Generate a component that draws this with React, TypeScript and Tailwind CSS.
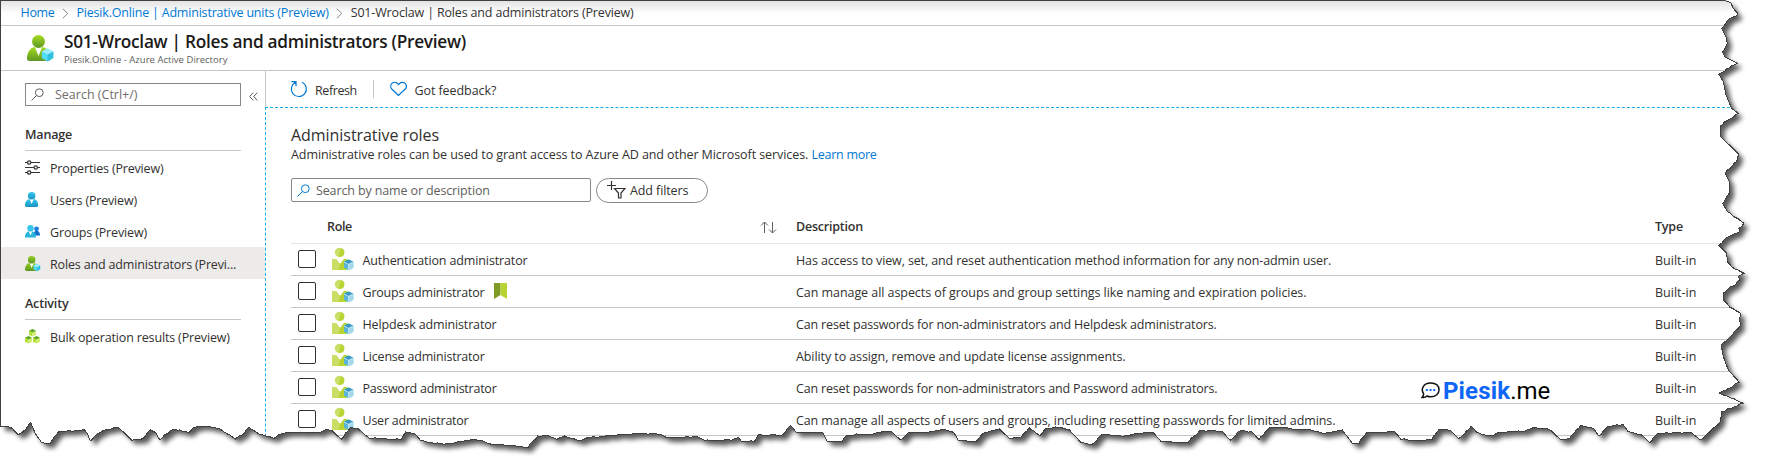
import type { ReactNode } from "react";

type Point = [number, number];

const bottomLeft: Point[] = [
  [0, 78], [10, 81], [20, 79], [32, 85], [48, 104], [58, 97], [68, 87], [80, 67], [92, 100], [108, 127], [130, 131],
  [142, 110], [155, 93], [190, 94], [220, 89], [228, 100], [236, 123], [250, 105], [268, 93], [290, 87], [310, 83],
  [325, 98], [345, 121], [375, 115], [393, 90], [407, 98], [418, 121], [430, 104], [455, 87], [495, 97], [505, 83],
  [540, 78], [575, 87], [615, 117], [635, 104], [650, 82], [668, 95], [680, 104], [716, 115], [728, 105], [760, 97],
  [820, 96], [835, 99], [850, 90], [868, 92], [892, 118], [915, 83], [935, 85], [965, 115], [1048, 119], [1060, 96],
  [1085, 102], [1100, 123], [1160, 133], [1240, 118], [1290, 133], [1380, 142], [1405, 108], [1430, 105],
  [1455, 118], [1475, 108], [1510, 121],
];
const bottomMiddle: Point[] = [
  [0, 113], [70, 105], [120, 101], [175, 102], [205, 113], [280, 110], [300, 121], [370, 121], [388, 113],
  [395, 123], [430, 124], [440, 103], [500, 107], [524, 76], [540, 98], [608, 97], [620, 124], [658, 125],
  [672, 105], [740, 102], [765, 94], [790, 96], [812, 120], [832, 98], [870, 98], [920, 88], [950, 97], [962, 120],
  [1008, 126], [1030, 98], [1070, 87], [1095, 115], [1125, 114], [1148, 83], [1175, 107], [1192, 85], [1225, 82],
  [1252, 88], [1282, 127], [1310, 135], [1340, 102], [1395, 108], [1470, 96], [1492, 124],
];
const bottomRight: Point[] = [
  [0, 127], [22, 127], [52, 93], [112, 93], [135, 121], [160, 93], [192, 95], [212, 119], [240, 83], [285, 83],
  [315, 90], [345, 87], [380, 99], [435, 90], [462, 130], [480, 130], [500, 98], [575, 95], [592, 118], [640, 121],
  [675, 119], [695, 88], [725, 91], [747, 116], [780, 79], [795, 96], [825, 108], [860, 97], [925, 93], [945, 84],
  [990, 88], [1020, 119], [1045, 115], [1075, 76], [1108, 85], [1123, 108], [1145, 80], [1188, 74], [1200, 94],
  [1235, 103], [1258, 128], [1280, 101], [1370, 97],
];
const rightUpper: Point[] = [
  [250, 1], [272, 8], [280, 25], [295, 42], [262, 62], [245, 85], [258, 110], [262, 130], [248, 155], [255, 172],
  [293, 190], [236, 222], [250, 245], [258, 285], [275, 325], [295, 340], [262, 362], [240, 378], [240, 408],
  [297, 463], [290, 485], [255, 520], [268, 545], [268, 580], [248, 610], [262, 635], [312, 670], [296, 685],
];
const rightLower: Point[] = [
  [300, 3], [265, 20], [236, 45], [260, 70], [262, 95], [275, 110], [312, 130], [295, 140], [300, 150], [250, 190],
  [252, 212], [270, 232], [300, 248], [300, 290], [280, 310], [243, 345], [250, 380], [258, 402], [265, 420],
  [298, 457], [238, 490], [312, 520], [245, 545], [240, 575], [205, 610], [180, 630],
];

const place = (pts: Point[], x0: number, sx: number, y0: number): Point[] =>
  pts.map(([x, y]) => [x0 + x / sx, y0 + y / 3]);

const edge: Point[] = [
  ...place(rightUpper, 1640, 3, 0),
  ...place(rightLower, 1640, 3, 230),
  ...place(bottomRight, 1180, 2.68, 400).reverse(),
  ...place(bottomMiddle, 590, 2.613, 400).reverse(),
  ...place(bottomLeft, 0, 2.613, 400).reverse(),
];

function roughen(pts: Point[]): Point[] {
  const out: Point[] = [];
  pts.forEach((p, i) => {
    const q = pts[i + 1];
    out.push(p);
    if (!q) return;
    const steps = Math.floor(Math.hypot(q[0] - p[0], q[1] - p[1]) / 3);
    for (let k = 1; k < steps; k++) {
      const seed = Math.sin((i + 1) * 91.7 + k * 37.3) * 4375.5;
      const j = (seed - Math.floor(seed) - 0.5) * 1.5;
      out.push([p[0] + ((q[0] - p[0]) * k) / steps + j * 0.5, p[1] + ((q[1] - p[1]) * k) / steps + j]);
    }
  });
  return out;
}

const tear = roughen(edge).map(([x, y]) => `${x.toFixed(1)} ${y.toFixed(1)}`).join("L");
const paper = `M0.5 0.5L${tear}L0.5 426Z`;

function TornEdge() {
  return (
    <svg className="pointer-events-none absolute inset-0" width="1765" height="469" viewBox="0 0 1765 469">
      <defs>
        <clipPath id="outside">
          <path d={`M-10 -10H1775V479H-10Z${paper}`} clipRule="evenodd" />
        </clipPath>
        <filter id="soft" x="-5%" y="-5%" width="110%" height="115%">
          <feGaussianBlur stdDeviation="2.4" />
        </filter>
      </defs>
      <g clipPath="url(#outside)">
        <rect width="1765" height="469" fill="#fff" />
        <path d={paper} transform="translate(4.5 4.5)" fill="#000" opacity="0.66" filter="url(#soft)" />
      </g>
      <path d={paper} fill="none" stroke="#404040" strokeWidth="1" shapeRendering="crispEdges" />
    </svg>
  );
}

function Person({ id, size, from, to, cube }: { id: string; size: number; from: string; to: string; cube?: boolean }) {
  return (
    <svg width={size} height={size} viewBox="0 0 26 26" className="shrink-0 overflow-visible">
      <defs>
        <linearGradient id={id} x1="0" y1="0" x2="0" y2="1">
          <stop offset="0" stopColor={from} />
          <stop offset="1" stopColor={to} />
        </linearGradient>
      </defs>
      <path d="M0 23.5C0 18 3 12.5 7.5 12L11.5 15L15.5 12C20.5 12.5 23 18 23 23.5Q23 26 20.5 26H2.5Q0 26 0 23.5Z" fill={`url(#${id})`} />
      <path d="M7.8 12L11.5 21L15.2 12Q11.5 14 7.8 12Z" fill="#fff" />
      <circle cx="11.5" cy="6.5" r="6.5" fill={`url(#${id})`} />
      {cube && (
        <g>
          <path d="M20.5 13.5L26.3 16.5V23L20.5 26.5L14.8 23V16.5Z" fill="#50dcfb" />
          <path d="M20.5 19.5L26.3 16.5V23L20.5 26.5Z" fill="#32bedd" />
          <path d="M20.5 13.5L26.3 16.5L20.5 19.5L14.8 16.5Z" fill="#9cebff" />
        </g>
      )}
    </svg>
  );
}

function RoleIcon() {
  return (
    <svg width="22" height="22" viewBox="0 0 22 22" className="shrink-0 overflow-visible">
      <path d="M0 11H4L8 16L12 11H15.5V22H0Z" fill="#b8d432" />
      <path d="M0 11H4L8 16L6.5 22H0Z" fill="#c9de64" />
      <circle cx="8" cy="4.5" r="4.5" fill="#b8d432" />
      <path d="M9 0.1A4.5 4.5 0 1 0 6.5 8.7Z" fill="#c9de64" />
      <path d="M16.6 11.5L21.3 13.8V19.8L16.6 22.2L12 19.8V13.8Z" fill="#59b4d9" />
      <path d="M16.6 16.3L21.3 13.8V19.8L16.6 22.2Z" fill="#a5d7ee" />
      <path d="M16.6 11.5L21.3 13.8L16.6 16.3L12 13.8Z" fill="#3999c6" />
      <path d="M12 13.8L16.6 16.3L21.3 13.8M16.6 16.3V22" stroke="#fff" strokeWidth="0.6" fill="none" />
    </svg>
  );
}

function SearchIcon({ className }: { className: string }) {
  return (
    <svg width="13" height="13" viewBox="0 0 13 13" fill="none" stroke="currentColor" className={className}>
      <circle cx="8.3" cy="4.7" r="3.9" />
      <path d="M5.5 7.5L0.6 12.4" />
    </svg>
  );
}

function Chevron() {
  return (
    <svg width="7" height="11" viewBox="0 0 7 11" fill="none" stroke="#8a8886" className="mx-[7.5px] mt-px">
      <path d="M0.8 0.8L5.8 5.5L0.8 10.2" />
    </svg>
  );
}

function SlidersIcon() {
  return (
    <svg width="15" height="15" viewBox="0 0 15 15" fill="none" stroke="#323130" strokeWidth="1.2">
      <path d="M0 2.5H2.5M6 2.5H15M0 7.5H9M12.5 7.5H15M0 12.5H2.5M6 12.5H15" />
      <circle cx="4.2" cy="2.5" r="1.7" />
      <circle cx="10.7" cy="7.5" r="1.7" />
      <circle cx="4.2" cy="12.5" r="1.7" />
    </svg>
  );
}

function GroupsIcon() {
  return (
    <svg width="15" height="13" viewBox="0 0 15 13">
      <path d="M8.5 10.5C8.5 7 10 5.5 11.5 5.5S15 7 15 10.5Z" fill="#0f6fc9" />
      <circle cx="11.5" cy="3.8" r="2.4" fill="#1580dd" />
      <path d="M0 12.5C0 8 2 6.2 5.5 6.2S11 8 11 12.5Z" fill="#2bb5dc" />
      <path d="M3.7 6.2L5.5 10.5L7.3 6.2Z" fill="#fff" />
      <circle cx="5.5" cy="3.2" r="3.2" fill="#35c5ea" />
    </svg>
  );
}

function Cube({ x, y }: { x: number; y: number }) {
  return (
    <g transform={`translate(${x} ${y})`}>
      <path d="M0 1.8L3.5 3.5V7.5L0 5.8Z" fill="#b4e02f" />
      <path d="M7 1.8L3.5 3.5V7.5L7 5.8Z" fill="#cdee72" />
      <path d="M3.5 0L7 1.8L3.5 3.5L0 1.8Z" fill="#5ea81c" />
    </g>
  );
}

function BulkIcon() {
  return (
    <svg width="15" height="15" viewBox="0 0 15 15">
      <Cube x={4} y={0} />
      <Cube x={0} y={7} />
      <Cube x={8} y={7} />
    </svg>
  );
}

function T({ className = "", children }: { className?: string; children: ReactNode }) {
  return <span className={`whitespace-nowrap ${className}`}>{children}</span>;
}

function NavItem({ icon, label, tracking, active }: { icon: ReactNode; label: string; tracking: string; active?: boolean }) {
  return (
    <li className={active ? "flex h-8 items-center bg-[#edebe9] pl-6" : "flex h-8 items-center pl-6"}>
      <span className="flex w-[25px] items-center">{icon}</span>
      <T className={`mt-[4px] ${tracking}`}>{label}</T>
    </li>
  );
}

function Sidebar() {
  return (
    <nav className="w-[264px] shrink-0">
      <div className="flex pt-3 pl-6">
        <div className="flex h-[23px] w-[216px] items-center border border-[#8a8886] pl-[5px] text-[#706e6c]">
          <SearchIcon className="text-[#605e5c]" />
          <T className="mt-px pl-[11px]">Search (Ctrl+/)</T>
        </div>
        <svg width="9" height="9" viewBox="0 0 9 9" fill="none" stroke="#605e5c" className="mt-[9px] ml-2">
          <path d="M4.3 0.5L0.7 4.5L4.3 8.5M8.3 0.5L4.7 4.5L8.3 8.5" />
        </svg>
      </div>
      <h2 className="mt-[18px] ml-6 flex h-[27px] w-[216px] items-start border-b border-[#c8c6c4] leading-[22px] font-semibold">
        <T className="tracking-[-0.18px]">Manage</T>
      </h2>
      <ul>
        <NavItem icon={<SlidersIcon />} label="Properties (Preview)" tracking="tracking-[-0.17px]" />
        <NavItem icon={<Person id="user" size={15} from="#35c8ee" to="#1a93c0" />} label="Users (Preview)" tracking="tracking-[-0.17px]" />
        <NavItem icon={<GroupsIcon />} label="Groups (Preview)" tracking="tracking-[-0.15px]" />
        <NavItem icon={<Person id="navrole" size={15} from="#94cf22" to="#5e9624" cube />} label="Roles and administrators (Previ..." tracking="tracking-[-0.16px]" active />
      </ul>
      <h2 className="mt-[14px] ml-6 flex h-[27px] w-[216px] items-start border-b border-[#c8c6c4] leading-[22px] font-semibold">
        <T className="tracking-[-0.15px]">Activity</T>
      </h2>
      <ul>
        <NavItem icon={<BulkIcon />} label="Bulk operation results (Preview)" tracking="tracking-[-0.15px]" />
      </ul>
    </nav>
  );
}

const roles = [
  { name: "Authentication administrator", nt: "tracking-[-0.13px]", dt: "tracking-[-0.12px]", marked: false, description: "Has access to view, set, and reset authentication method information for any non-admin user." },
  { name: "Groups administrator", nt: "tracking-[-0.2px]", dt: "tracking-[-0.06px]", marked: true, description: "Can manage all aspects of groups and group settings like naming and expiration policies." },
  { name: "Helpdesk administrator", nt: "tracking-[-0.14px]", dt: "tracking-[-0.16px]", marked: false, description: "Can reset passwords for non-administrators and Helpdesk administrators." },
  { name: "License administrator", nt: "tracking-[-0.2px]", dt: "tracking-[-0.09px]", marked: false, description: "Ability to assign, remove and update license assignments." },
  { name: "Password administrator", nt: "tracking-[-0.24px]", dt: "tracking-[-0.18px]", marked: false, description: "Can reset passwords for non-administrators and Password administrators." },
  { name: "User administrator", nt: "tracking-[-0.23px]", dt: "tracking-[-0.1px]", marked: false, description: "Can manage all aspects of users and groups, including resetting passwords for limited admins." },
];

function RolesTable() {
  return (
    <div>
      <div className="flex h-8 items-center border-b border-[#e6e5e4] font-semibold">
        <div className="flex w-[505px] items-center pl-[36px]">
          <T className="tracking-[-0.33px]">Role</T>
          <svg width="17" height="13" viewBox="0 0 17 13" fill="none" stroke="#605e5c" className="mr-[19px] ml-auto">
            <path d="M4.5 12V1M1 4.5L4.5 1L8 4.5M12.5 1V12M9 8.5L12.5 12L16 8.5" />
          </svg>
        </div>
        <T className="w-[859px] tracking-[-0.21px]">Description</T>
        <T className="tracking-[-0.19px]">Type</T>
      </div>
      {roles.map((role) => (
        <div key={role.name} className="flex h-8 items-center border-b border-[#c8c6c4]">
          <div className="flex w-[505px] items-center pl-[7px]">
            <span className="mb-px size-[18px] rounded-[2px] border border-[#323130]" />
            <span className="mb-px ml-4 flex"><RoleIcon /></span>
            <T className={`mt-[3px] ml-[8.5px] ${role.nt}`}>{role.name}</T>
            {role.marked && (
              <svg width="13" height="16" viewBox="0 0 13 16" className="mb-px ml-2.5">
                <path d="M0 0H6.5V12L0 16Z" fill="#7f9a25" />
                <path d="M6.5 0H13V16L6.5 12Z" fill="#b8d432" />
              </svg>
            )}
          </div>
          <T className={`mt-[3px] w-[859px] ${role.dt}`}>{role.description}</T>
          <T className="mt-[3px]">Built-in</T>
        </div>
      ))}
    </div>
  );
}

function Toolbar() {
  return (
    <div className="flex h-9 items-center border-l border-[#c8c6c4] pl-6">
      <svg width="18" height="18" viewBox="0 0 18 18" fill="none" stroke="#0078d4" strokeWidth="1.2">
        <path d="M5.5 2.3A7.5 7.5 0 1 0 12 2.2M1.5 1.7H6V6.2" />
      </svg>
      <T className="mt-[4px] ml-[7px] tracking-[-0.4px]">Refresh</T>
      <span className="ml-4 h-[18px] w-px bg-[#c8c6c4]" />
      <svg width="17" height="16" viewBox="0 0 17 16" fill="none" stroke="#0078d4" strokeWidth="1.2" className="ml-4">
        <path d="M8.5 14.5L1.8 8C0.3 6.3 0.4 3.8 1.9 2.4S6 0.9 7.5 2.5L8.5 3.6L9.5 2.5C11 0.9 13.6 0.9 15.1 2.4S16.7 6.3 15.2 8Z" />
      </svg>
      <T className="mt-[4px] ml-[7.5px] tracking-[-0.06px]">Got feedback?</T>
    </div>
  );
}

function Brand() {
  return (
    <div className="absolute top-[379px] left-[1421px] flex items-center font-['Roboto'] text-[24px] leading-6 text-black">
      <svg width="19" height="17" viewBox="0 0 19 17" fill="none" className="mr-[3px] mb-[2px]">
        <path d="M2.5 11.5C-0.5 7 2.5 1 9.5 1S18 4.5 18 8S15 14.8 9.5 14.8Q7.5 14.8 6 14Q4 16 1 15.5Q3 13.5 2.5 11.5Z" stroke="#111" strokeWidth="1.5" />
        <path d="M4.8 8H6.8M8.5 8H10.5M12.2 8H14.2" stroke="#0d6efd" strokeWidth="2" />
      </svg>
      <T className="font-bold tracking-[0.15px] text-[#0d66f5]">Piesik</T>
      <T>.me</T>
    </div>
  );
}

export default function App() {
  return (
    <div className="relative h-[469px] w-[1765px] overflow-hidden bg-white pt-px pl-px font-['Open_Sans','Noto_Sans',sans-serif] text-[12.5px] text-[#323130]">
      <div className="flex h-[25px] items-center border-b border-[#c8c6c4] bg-linear-to-b from-[#e4e2e3] to-white to-50% pl-[19.5px]">
        <T className="tracking-[-0.33px] text-[#0078d4]">Home</T>
        <Chevron />
        <T className="tracking-[-0.2px] text-[#0078d4]">Piesik.Online | Administrative units (Preview)</T>
        <Chevron />
        <T className="tracking-[-0.16px]">S01-Wroclaw | Roles and administrators (Preview)</T>
      </div>
      <header className="flex h-[45px] items-center border-b border-[#c8c6c4] pl-[26px]">
        <Person id="headrole" size={26} from="#a4dc1f" to="#5e9624" cube />
        <div className="ml-[11px]">
          <h1 className="text-[17.25px] leading-[24px] font-semibold text-[#1b1a19]"><T className="tracking-[-0.28px]">S01-Wroclaw | Roles and administrators (Preview)</T></h1>
          <p className="text-[9.5px] leading-[12px] text-[#605e5c]"><T className="tracking-[0.02px]">Piesik.Online - Azure Active Directory</T></p>
        </div>
      </header>
      <div className="flex">
        <Sidebar />
        <main className="flex-1">
          <Toolbar />
          <section className="h-[400px] border-t border-l border-dashed border-[#12aee6] pt-[17px] pl-[25px]">
            <h2 className="text-[16px] leading-5"><T className="tracking-[-0.05px]">Administrative roles</T></h2>
            <p className="leading-[19px]"><T className="tracking-[-0.08px]">Administrative roles can be used to grant access to Azure AD and other Microsoft services.</T> <T className="tracking-[-0.27px] text-[#0078d4]">Learn more</T></p>
            <div className="mt-[14px] flex gap-[5px]">
              <div className="flex h-6 w-[300px] items-center rounded-[2px] border border-[#8a8886] pl-[5px] text-[#605e5c]">
                <SearchIcon className="text-[#0078d4]" />
                <T className="mt-[2px] ml-[6px] tracking-[-0.13px]">Search by name or description</T>
              </div>
              <div className="flex h-[25px] w-[112px] items-center rounded-full border border-[#8a8886] pl-2.5">
                <svg width="19" height="18" viewBox="0 0 19 18" fill="none" stroke="#323130" strokeWidth="1.2" className="mb-px">
                  <path d="M4.5 0V9M0 4.5H9M7.5 7.5H18L14 12V17H11.5V12Z" />
                </svg>
                <T className="mt-[2px] ml-1 tracking-[-0.1px]">Add filters</T>
              </div>
            </div>
            <div className="mt-[9px]"><RolesTable /></div>
          </section>
        </main>
      </div>
      <Brand />
      <TornEdge />
    </div>
  );
}
